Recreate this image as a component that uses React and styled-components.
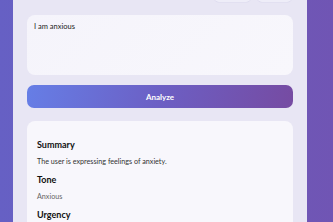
import React from "react";
import styled, { createGlobalStyle } from "styled-components";

const GlobalStyle = createGlobalStyle`
  html, body {
    margin: 0;
    padding: 0;
    height: 100%;
    overflow: hidden;
  }
  body {
    background: linear-gradient(90deg, #6660c4 0%, #6a5bbd 50%, #7055b4 100%);
    font-family: Lato, "Noto Sans", sans-serif;
  }
`;

const Page = styled.div`
  padding-left: 13px;
`;

const Card = styled.div`
  width: 266px;
  margin-top: -20px;
  padding: 0 14px 20px;
  background: #e8e6f4;
  border-radius: 10px;
  display: flex;
  flex-direction: column;
`;

const TopBar = styled.div`
  display: flex;
  justify-content: flex-end;
  gap: 6px;
  height: 22px;
  margin-right: 1px;
`;

const TopButton = styled.div`
  width: ${(p) => p.w}px;
  height: 22px;
  border-radius: 5px;
  background: #eeedf8;
  box-shadow: 0 0 0 0.5px #dcd9ee;
`;

const Input = styled.div`
  margin-top: 13px;
  height: 60px;
  box-sizing: border-box;
  padding: 7px 7px;
  background: linear-gradient(135deg, #f5f4fb, #f8f7fc);
  border-radius: 8px;
  font-size: 7.5px;
  color: #222;
`;

const AnalyzeButton = styled.div`
  margin-top: 10px;
  height: 23px;
  border-radius: 7px;
  background: linear-gradient(100deg, #667ee6 0%, #6c5fc4 50%, #764ba2 100%);
  color: #fff;
  font-size: 8px;
  font-weight: 700;
  display: flex;
  align-items: center;
  justify-content: center;
`;

const Result = styled.div`
  margin-top: 13px;
  background: #f8f7fc;
  border-radius: 8px;
  padding: 18px 10px 20px;
  height: 200px;
`;

const Heading = styled.div`
  font-size: 9px;
  line-height: 12px;
  font-weight: 700;
  color: #111;
  margin-bottom: 6px;
`;

const Text = styled.div`
  font-size: 7.2px;
  line-height: 10px;
  color: ${(p) => (p.muted ? "#666" : "#333")};
  margin-bottom: 7px;
`;

export default function App() {
  return (
    <>
      <GlobalStyle />
      <Page>
        <Card>
          <TopBar>
            <TopButton w={37} />
            <TopButton w={35} />
          </TopBar>
          <Input>I am anxious</Input>
          <AnalyzeButton>Analyze</AnalyzeButton>
          <Result>
            <Heading>Summary</Heading>
            <Text>The user is expressing feelings of anxiety.</Text>
            <Heading>Tone</Heading>
            <Text muted>Anxious</Text>
            <Heading>Urgency</Heading>
          </Result>
        </Card>
      </Page>
    </>
  );
}
